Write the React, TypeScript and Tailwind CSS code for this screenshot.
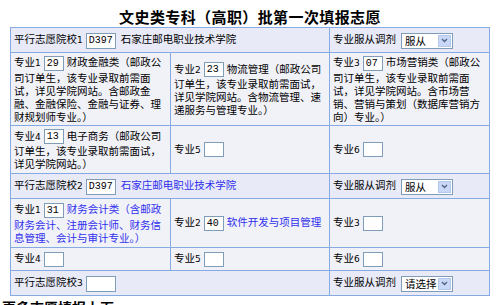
import type { ReactNode } from "react";

const cell = "border border-[#86abe3] px-[3px] py-0 align-middle";
const schoolRow = "bg-[#e8eaf7] h-[25px]";
const majorRow = "bg-[#f1f1f8]";

function Num({ n }: { n: string }) {
  return <span className="text-[9px] font-['DejaVu_Sans',sans-serif]">{n}</span>;
}

function Box({ v, wide }: { v?: string; wide?: boolean }) {
  return (
    <span
      className={`inline-block align-middle ${wide ? "w-[30px] h-[16px]" : "w-[20px] h-[15px]"} border border-[#7f9db9] bg-white pl-[2px] text-[10px] leading-[13px] font-['Liberation_Mono',monospace] text-black mx-[3px]`}
    >
      {v}
    </span>
  );
}

function Pick({ v }: { v: string }) {
  return (
    <span className="inline-flex align-middle h-[16px] w-[52px] ml-[5px] border border-[#7f9db9] bg-white items-center">
      <span className="pl-[3px] text-[10.5px] leading-[14px]">{v}</span>
      <span className="ml-auto mr-[1px] w-[13px] h-[12px] bg-[#c9d8f6] border border-[#b4c8ee] flex items-center justify-center">
        <svg width="7" height="5" viewBox="0 0 7 5">
          <path d="M1 1l2.5 2.5L6 1" fill="none" stroke="#4d6185" strokeWidth="1.3" />
        </svg>
      </span>
    </span>
  );
}

function Major({ n, v, children, blue }: { n: string; v?: string; children?: ReactNode; blue?: boolean }) {
  return (
    <div className="leading-[14px]">
      专业<Num n={n} />
      <Box v={v} />
      {children && <span className={blue ? "text-[#3030ee]" : ""}>{children}</span>}
    </div>
  );
}

function Adjust({ v }: { v: string }) {
  return (
    <td className={cell}>
      专业服从调剂
      <Pick v={v} />
    </td>
  );
}

export default function App() {
  return (
    <div className="w-[500px] h-[305px] overflow-hidden bg-white text-black text-[10.5px] font-['Noto_Sans_CJK_SC',sans-serif]">
      <div className="h-[27px] flex items-end justify-center pb-[1px] text-[15px] font-bold tracking-[0.4px] leading-[18px]">
        文史类专科（高职）批第一次填报志愿
      </div>
      <table className="ml-[10px] w-[479px] table-fixed">
        <colgroup>
          <col className="w-[160px]" />
          <col className="w-[159px]" />
          <col className="w-[160px]" />
        </colgroup>
        <tbody>
          <tr className={schoolRow}>
            <td className={cell} colSpan={2}>
              平行志愿院校<Num n="1" />
              <Box v="D397" wide />
              <span className="ml-[2px]">石家庄邮电职业技术学院</span>
            </td>
            <Adjust v="服从" />
          </tr>
          <tr className={`${majorRow} h-[73px]`}>
            <td className={cell}>
              <Major n="1" v="29">
                财政金融类（邮政公
              </Major>
              <div className="leading-[13px]">
                司订单生，该专业录取前需面
                <br />
                试，详见学院网站。含邮政金
                <br />
                融、金融保险、金融与证券、理
                <br />
                财规划师专业。）
              </div>
            </td>
            <td className={cell}>
              <Major n="2" v="23">
                物流管理（邮政公司
              </Major>
              <div className="leading-[13px]">
                订单生，该专业录取前需面试，
                <br />
                详见学院网站。含物流管理、速
                <br />
                递服务与管理专业。）
              </div>
            </td>
            <td className={cell}>
              <Major n="3" v="07">
                市场营销类（邮政公
              </Major>
              <div className="leading-[13px]">
                司订单生，该专业录取前需面
                <br />
                试，详见学院网站。含市场营
                <br />
                销、营销与策划（数据库营销方
                <br />
                向）专业。）
              </div>
            </td>
          </tr>
          <tr className={`${majorRow} h-[48px]`}>
            <td className={cell}>
              <Major n="4" v="13">
                电子商务（邮政公司
              </Major>
              <div className="leading-[13px]">
                订单生，该专业录取前需面试，
                <br />
                详见学院网站。）
              </div>
            </td>
            <td className={cell}>
              <Major n="5" />
            </td>
            <td className={cell}>
              <Major n="6" />
            </td>
          </tr>
          <tr className={schoolRow}>
            <td className={cell} colSpan={2}>
              平行志愿院校<Num n="2" />
              <Box v="D397" wide />
              <span className="ml-[2px] text-[#3030ee]">石家庄邮电职业技术学院</span>
            </td>
            <Adjust v="服从" />
          </tr>
          <tr className={`${majorRow} h-[49px]`}>
            <td className={cell}>
              <Major n="1" v="31" blue>
                财务会计类（含邮政
              </Major>
              <div className="leading-[13px] text-[#3030ee]">
                财务会计、注册会计师、财务信
                <br />
                息管理、会计与审计专业。）
              </div>
            </td>
            <td className={cell}>
              <Major n="2" v="40" blue>
                软件开发与项目管理
              </Major>
            </td>
            <td className={cell}>
              <Major n="3" />
            </td>
          </tr>
          <tr className={`${majorRow} h-[23px]`}>
            <td className={cell}>
              <Major n="4" />
            </td>
            <td className={cell}>
              <Major n="5" />
            </td>
            <td className={cell}>
              <Major n="6" />
            </td>
          </tr>
          <tr className={schoolRow}>
            <td className={cell} colSpan={2}>
              平行志愿院校<Num n="3" />
              <Box wide />
            </td>
            <Adjust v="请选择" />
          </tr>
        </tbody>
      </table>
      <div className="mt-[3px] pl-[2px] text-[14px] font-bold leading-[16px]">更多志愿填报上页</div>
    </div>
  );
}
